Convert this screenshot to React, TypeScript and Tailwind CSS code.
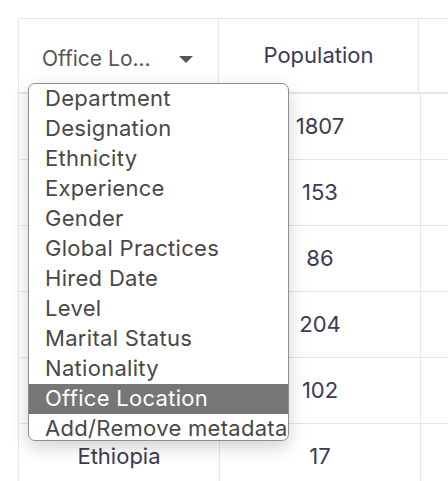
import React from "react";

const items = [
  "Department",
  "Designation",
  "Ethnicity",
  "Experience",
  "Gender",
  "Global Practices",
  "Hired Date",
  "Level",
  "Marital Status",
  "Nationality",
  "Office Location",
  "Add/Remove metadata",
];

const rows = [
  ["", "1807"],
  ["", "153"],
  ["", "86"],
  ["", "204"],
  ["", "102"],
  ["Ethiopia", "17"],
];

export default function App() {
  return (
    <div
      className="relative w-[448px] h-[481px] overflow-hidden bg-white"
      style={{ fontFamily: "Inter, 'Open Sans', sans-serif" }}
    >
      <div className="ml-[18px] mt-[18px] w-[600px]">
        {/* header */}
        <div className="flex h-[76px] border-t border-l border-b-2 border-[#e6e6e6]">
          <div className="w-[200px] shrink-0 border-r border-[#e6e6e6] flex items-center pt-[7px] pl-[23px] pr-[25px] justify-between text-[21px] text-[#555555]">
            <span>Office Lo...</span>
            <svg width="14" height="7" viewBox="0 0 14 7" className="mt-[1px]">
              <path d="M0 0 L14 0 L7 7 Z" fill="#555555" />
            </svg>
          </div>
          <div className="w-[200px] shrink-0 border-r border-[#e6e6e6] flex items-center justify-center text-[22px] text-[#3b3b55]">
            Population
          </div>
          <div className="flex-1" />
        </div>
        {/* body */}
        {rows.map((r, i) => (
          <div key={i} className="flex h-[66px] border-l border-b border-[#e6e6e6]">
            <div className="w-[201px] shrink-0 border-r border-[#e6e6e6] flex items-center justify-center text-[22px] text-[#3b3b55]">
              {r[0]}
            </div>
            <div className="w-[201px] shrink-0 border-r border-[#e6e6e6] flex items-center justify-center text-[22px] text-[#3b3b55]">
              {r[1]}
            </div>
            <div className="flex-1" />
          </div>
        ))}
      </div>

      {/* dropdown */}
      <div className="absolute left-[28px] top-[83px] w-[261px] h-[358px] border border-[#8f8f8f] rounded-[7px] bg-white overflow-hidden shadow-[0_6px_18px_rgba(0,0,0,0.18)]">
        {items.map((it) => (
          <div
            key={it}
            className={
              "h-[30px] leading-[29px] pl-[16px] whitespace-nowrap text-[22px] tracking-[0.3px] " +
              (it === "Office Location" ? "bg-[#767676] text-white" : "text-[#484848]")
            }
          >
            {it}
          </div>
        ))}
      </div>
    </div>
  );
}
